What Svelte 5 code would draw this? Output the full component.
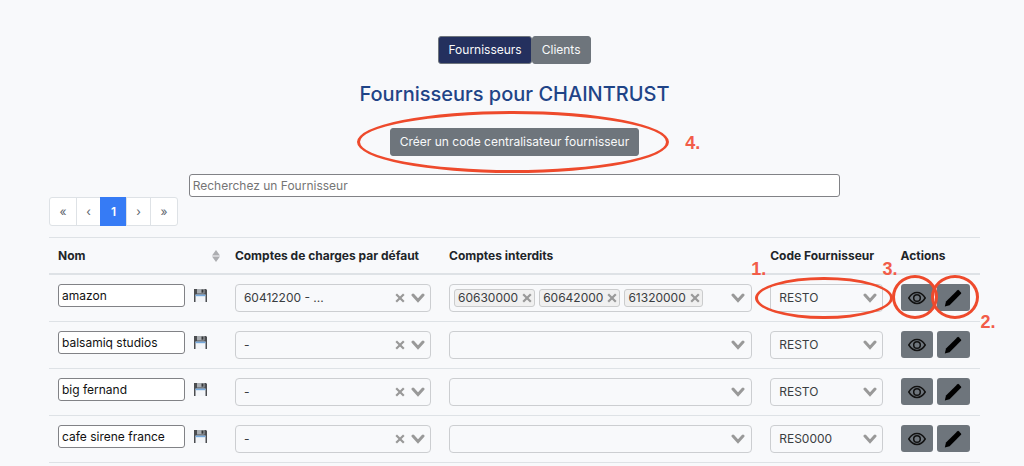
<script>
  let suppliers = $state([
    { name: 'amazon', charge: '60412200 - ...', blocked: ['60630000', '60642000', '61320000'], code: 'RESTO', marked: true },
    { name: 'balsamiq studios', charge: '-', blocked: [], code: 'RESTO' },
    { name: 'big fernand', charge: '-', blocked: [], code: 'RESTO' },
    { name: 'cafe sirene france', charge: '-', blocked: [], code: 'RES0000' }
  ]);
  let search = $state('');
</script>

{#snippet chevron()}
  <svg class="chevron" viewBox="0 0 14 10" aria-hidden="true"><path d="M2 2l5 5.5L12 2" /></svg>
{/snippet}

{#snippet cross()}
  <svg class="cross" viewBox="0 0 10 10" aria-hidden="true"><path d="M1.2 1.2l7.6 7.6M8.8 1.2L1.2 8.8" /></svg>
{/snippet}

<main>
  <nav class="tabs" aria-label="Type de tiers">
    <button class="btn active">Fournisseurs</button><button class="btn">Clients</button>
  </nav>

  <h1>Fournisseurs pour CHAINTRUST</h1>

  <div class="create">
    <button class="btn">Créer un code centralisateur fournisseur</button>
    <span class="ring ring-create"></span>
    <span class="mark mark-4">4.</span>
  </div>

  <input class="search" type="text" aria-label="Recherchez un Fournisseur" placeholder="Recherchez un Fournisseur" bind:value={search} />

  <ul class="pages">
    <li><a href="#first">«</a></li>
    <li class="narrow"><a href="#previous">‹</a></li>
    <li class="current"><a href="#page-1" aria-current="page">1</a></li>
    <li class="narrow"><a href="#next">›</a></li>
    <li><a href="#last">»</a></li>
  </ul>

  <table>
    <colgroup>
      <col class="c-name" /><col class="c-charge" /><col class="c-blocked" /><col class="c-code" /><col class="c-actions" />
    </colgroup>
    <thead>
      <tr>
        <th>
          <div class="sortable">
            Nom
            <svg class="sort" viewBox="0 0 8 12" aria-hidden="true"><path d="M4 0l4 5.4H0zM4 12l4-5.4H0z" /></svg>
          </div>
        </th>
        <th>Comptes de charges par défaut</th>
        <th>Comptes interdits</th>
        <th>Code Fournisseur</th>
        <th>Actions</th>
      </tr>
    </thead>
    <tbody>
      {#each suppliers as s}
        <tr>
          <td>
            <div class="name">
              <input type="text" aria-label="Nom" bind:value={s.name} />
              <button class="bare" aria-label="Enregistrer">
                <svg class="floppy" viewBox="0 0 13 13" aria-hidden="true">
                  <path d="M0 0h12l1 1v12H0z" fill="#4b4d50" />
                  <path d="M3 0h7.5v4.5H3z" fill="#a9adb1" />
                  <path d="M7.5 .5h2v3.2h-2z" fill="#36383b" />
                  <path d="M1.5 5.6h10V13h-10z" fill="#f3f5f8" />
                  <path d="M1.5 5.6h10v1.6h-10z" fill="#76a9dc" />
                </svg>
              </button>
            </div>
          </td>
          <td>
            <div class="field">
              <select class="clearable" aria-label="Comptes de charges par défaut"><option>{s.charge}</option></select>
              <button class="bare clear" aria-label="Effacer">{@render cross()}</button>
              {@render chevron()}
            </div>
          </td>
          <td>
            <div class="field multi">
              {#each s.blocked as account}
                <span class="tag">{account}<button class="bare" aria-label="Retirer {account}">{@render cross()}</button></span>
              {/each}
              <input type="text" aria-label="Comptes interdits" />
              {@render chevron()}
            </div>
          </td>
          <td>
            <div class="field">
              <select aria-label="Code Fournisseur"><option>{s.code}</option></select>
              {@render chevron()}
              {#if s.marked}
                <span class="ring ring-code"></span>
                <span class="mark mark-1">1.</span>
              {/if}
            </div>
          </td>
          <td>
            <div class="actions">
              <button class="icon" aria-label="Voir">
                <svg class="eye" viewBox="0 0 18 14" aria-hidden="true">
                  <path d="M.8 7C3 3.4 5.8 1.6 9 1.6S15 3.4 17.2 7C15 10.6 12.2 12.4 9 12.4S3 10.6 .8 7z" />
                  <circle cx="9" cy="7" r="3.3" />
                </svg>
              </button>
              <button class="icon" aria-label="Modifier">
                <svg class="pencil" viewBox="0 0 18 18" aria-hidden="true">
                  <path d="M13.4 1.2a1 1 0 0 1 1.4 0l2.2 2.2a1 1 0 0 1 0 1.4L5.6 16.2 .8 17.4 2 12.6z" />
                </svg>
              </button>
              {#if s.marked}
                <span class="ring ring-view"></span>
                <span class="ring ring-edit"></span>
                <span class="mark mark-3">3.</span>
                <span class="mark mark-2">2.</span>
              {/if}
            </div>
          </td>
        </tr>
      {/each}
    </tbody>
  </table>
</main>

<style>
  :global(body) {
    margin: 0;
    background: #f8f9fb;
  }
  main {
    padding: 36px 44px 0 49px;
    display: flex;
    flex-direction: column;
    align-items: center;
    font: 12px/18px Inter, sans-serif;
    color: #212529;
  }
  button, input, select {
    font: inherit;
    color: inherit;
    box-sizing: border-box;
    margin: 0;
  }
  .tabs { display: flex; }
  .btn {
    height: 28px;
    padding: 0 9px;
    border: 1px solid #6e757c;
    border-radius: 3px;
    background: #6e757c;
    color: #f8f9fa;
    white-space: nowrap;
  }
  .btn.active {
    background: #24305e;
  }
  h1 {
    margin: 16px 0 20px;
    font-size: 20px;
    line-height: 28px;
    font-weight: 500;
    color: #1f4487;
  }
  .create {
    position: relative;
    display: flex;
  }
  .search {
    width: 70%;
    height: 23px;
    margin-top: 18px;
    padding: 0 3px;
    border: 1px solid #818286;
    border-radius: 3px;
    background: #fff;
  }
  .search::placeholder {
    color: #757575;
    opacity: 1;
  }
  .pages {
    align-self: flex-start;
    display: flex;
    margin: 0 0 11px;
    padding: 0;
    list-style: none;
    border: 1px solid #dee2e6;
    border-radius: 3px;
    background: #fff;
  }
  .pages li + li { border-left: 1px solid #dee2e6; }
  .pages a {
    display: block;
    width: 26px;
    line-height: 27px;
    text-align: center;
    text-decoration: none;
    color: #5d656d;
  }
  .pages .narrow a { width: 23px; }
  .pages .current {
    margin: -1px 0;
    border-color: #367bf5;
    background: #367bf5;
  }
  .pages .current a {
    width: 25px;
    line-height: 29px;
    font-weight: 600;
    color: #fff;
  }
  table {
    width: 100%;
    table-layout: fixed;
    border-collapse: separate;
    border-spacing: 0;
    border-bottom: 1px solid #dee2e6;
  }
  .c-name { width: 19%; }
  .c-charge { width: 23%; }
  .c-blocked { width: 34.5%; }
  .c-code { width: 14%; }
  .c-actions { width: 9.5%; }
  th {
    height: 35px;
    padding: 0 0 0 9px;
    border-top: 1px solid #dee2e6;
    border-bottom: 2px solid #dee2e6;
    text-align: left;
    font-weight: 700;
    white-space: nowrap;
  }
  td {
    padding: 9px;
    vertical-align: top;
  }
  tr + tr td { border-top: 1px solid #dee2e6; }
  .sortable {
    display: flex;
    align-items: center;
    justify-content: space-between;
    padding-right: 6px;
  }
  .sort {
    width: 8px;
    height: 12px;
    fill: #adaeb1;
  }
  .bare {
    display: flex;
    padding: 0;
    border: 0;
    background: none;
  }
  .name {
    display: flex;
    align-items: center;
    gap: 9px;
    height: 23px;
  }
  .name input {
    flex: 1;
    min-width: 0;
    height: 23px;
    padding: 0 3px;
    border: 1px solid #818286;
    border-radius: 3px;
    background: #fff;
    color: #111;
  }
  .floppy {
    width: 13px;
    height: 13px;
    margin-right: 10px;
  }
  .field {
    position: relative;
    display: flex;
    align-items: center;
    height: 28px;
  }
  .field select, .multi {
    box-sizing: border-box;
    border: 1px solid #ccced1;
    border-radius: 4px;
    background: transparent;
  }
  .field select {
    appearance: none;
    width: 100%;
    height: 28px;
    padding: 0 26px 0 8px;
    color: #3a3d41;
  }
  .field .clearable { padding-right: 40px; }
  .multi {
    padding: 0 0 0 4px;
    gap: 4px;
  }
  .multi input {
    flex: 1;
    min-width: 0;
    border: 0;
    background: transparent;
  }
  .tag {
    display: flex;
    align-items: center;
    gap: 4px;
    padding: 0 2px 0 3px;
    line-height: 16px;
    border: 1px solid #cbcccd;
    border-radius: 3px;
    background: #f0f0f0;
    color: #3a3d41;
  }
  .cross {
    width: 10px;
    height: 10px;
    fill: none;
    stroke: #999;
    stroke-width: 2.2;
  }
  .chevron {
    position: absolute;
    right: 6px;
    width: 14px;
    height: 10px;
    fill: none;
    stroke: #999;
    stroke-width: 3;
    stroke-linecap: round;
    pointer-events: none;
  }
  .clear {
    position: absolute;
    right: 26px;
  }
  .actions {
    position: relative;
    display: flex;
    gap: 4px;
    width: 69px;
  }
  .icon {
    display: flex;
    align-items: center;
    justify-content: center;
    width: 33px;
    height: 27px;
    padding: 0;
    border: 0;
    border-radius: 3px;
    background: #6e757c;
  }
  .eye {
    width: 18px;
    height: 14px;
    fill: none;
    stroke: #111;
    stroke-width: 1.5;
  }
  .pencil {
    width: 18px;
    height: 18px;
    fill: #000;
  }

  /* Numbered callouts drawn over the controls */
  .ring {
    position: absolute;
    box-sizing: border-box;
    border: 3px solid #ee4a2c;
    border-radius: 50%;
    pointer-events: none;
    z-index: 1;
  }
  .mark {
    position: absolute;
    font-size: 18px;
    line-height: 18px;
    font-weight: 700;
    font-family: "Liberation Sans", Arial, sans-serif;
    color: #f25c48;
    pointer-events: none;
    z-index: 1;
  }
  .ring-create { inset: -17px -30px -17px -33px; }
  .mark-4 { left: calc(100% + 46px); top: 6px; }
  .ring-code { inset: -7px -10px -7px -15px; }
  .mark-1 { left: -19px; top: -24px; }
  .ring-view { inset: -9px 32px -8px -9px; }
  .ring-edit { inset: -9px -9px -8px 30px; }
  .mark-3 { left: -18px; top: -24px; }
  .mark-2 { left: 80px; top: 29px; }
</style>
